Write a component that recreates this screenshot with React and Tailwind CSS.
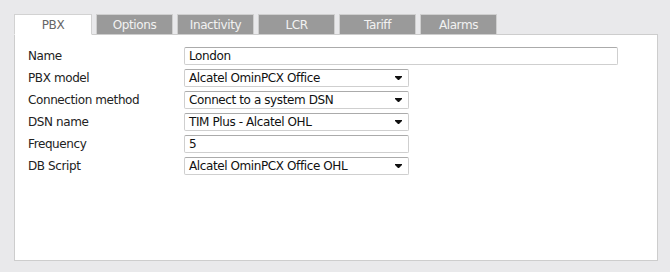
const tabs = ["PBX", "Options", "Inactivity", "LCR", "Tariff", "Alarms"];

const fields = [
  { label: "Name", value: "London", type: "text", wide: true },
  { label: "PBX model", value: "Alcatel OminPCX Office", type: "select" },
  { label: "Connection method", value: "Connect to a system DSN", type: "select" },
  { label: "DSN name", value: "TIM Plus - Alcatel OHL", type: "select" },
  { label: "Frequency", value: "5", type: "text" },
  { label: "DB Script", value: "Alcatel OminPCX Office OHL", type: "select" },
];

const Caret = () => (
  <svg width="7" height="5" viewBox="0 0 7 5" className="shrink-0">
    <path d="M0 0.5h7M0.5 1.5h6M1.5 2.5h4M2.5 3.5h2" stroke="#111" strokeWidth="1" />
  </svg>
);

const App = () => {
  return (
    <div
      className="h-[272px] w-[670px] bg-[#e9e9eb] pt-[14px] pl-[14px] pr-[12px] text-[12px] tracking-[-0.4px] text-[#222]"
      style={{ fontFamily: '"DejaVu Sans", Verdana, sans-serif' }}
    >
      {/* Tabs */}
      <div className="flex gap-[4px] relative z-10">
        {tabs.map((tab, i) => (
          <div
            key={tab}
            className={
              i === 0
                ? "w-[78px] h-[21px] bg-white border border-[#d2d2d2] border-b-white flex items-center justify-center text-[#666]"
                : "w-[77px] h-[20px] bg-[#9a9a9a] border border-[#cfcfcf] border-b-0 flex items-center justify-center text-[#f2f2f2]"
            }
          >
            {tab}
          </div>
        ))}
      </div>

      {/* Panel */}
      <div className="-mt-px h-[227px] w-[644px] bg-white border border-[#cdcdcd] pt-[12px] pl-[13px]">
        <div className="flex flex-col gap-[4px]">
          {fields.map((f) => (
            <div key={f.label} className="flex items-center h-[18px]">
              <div className="w-[156px]">{f.label}</div>
              <div
                className={`${f.wide ? "w-[434px]" : "w-[225px]"} h-[18px] border border-[#cfcfcf] border-t-[#ababab] rounded-[2px] flex items-center pl-[4px] pr-[6px] text-[#111]`}
              >
                <span className="flex-1">{f.value}</span>
                {f.type === "select" && <Caret />}
              </div>
            </div>
          ))}
        </div>
      </div>
    </div>
  );
};

export default App;
